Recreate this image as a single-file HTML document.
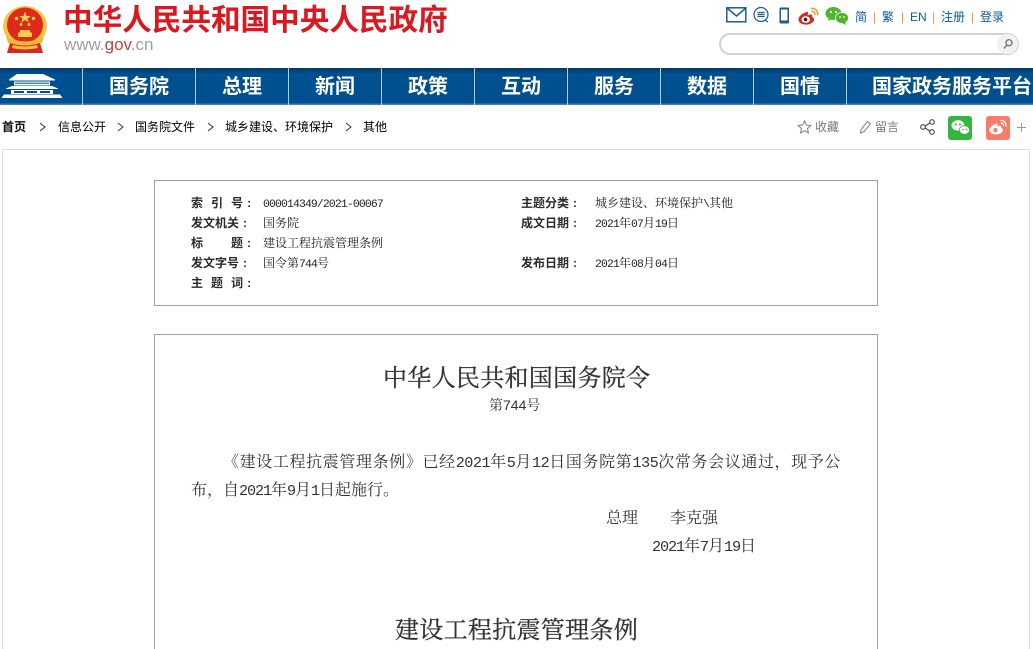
<!DOCTYPE html>
<html lang="zh"><head><meta charset="utf-8"><title>建设工程抗震管理条例</title>
<style>
*{margin:0;padding:0;box-sizing:border-box}
html,body{width:1033px;height:649px;overflow:hidden;background:#fff}
body{position:relative;font-family:"Liberation Sans","WenQuanYi Zen Hei","Noto Sans CJK SC",sans-serif;color:#222}
.a{position:absolute;white-space:nowrap}
svg{position:absolute;overflow:visible}
i{font-style:normal;font-family:"Liberation Mono",monospace;font-size:.95em;letter-spacing:-.074em}
.p1 i{letter-spacing:-.5px}
.nav{position:absolute;left:0;top:68px;width:1033px;height:37px;background:linear-gradient(#003a68 0,#00508f 6px,#00508f 35px,#3f82b5 36px)}
.sep{position:absolute;top:68px;width:1px;height:37px;background:#b7c9d8}
.n{position:absolute;top:74px;height:26px;line-height:26px;color:#fff;font-size:20px;font-weight:bold;text-align:center;font-family:"Liberation Sans","Noto Sans CJK SC",sans-serif}
.tl{font-size:12px;color:#0b5a93;top:9px;line-height:16px}
.bar{font-size:12px;color:#e8923a;top:9px;line-height:16px}
.b{font-size:12px;line-height:14px;color:#000}
.k{font-size:12px;font-weight:bold;line-height:14px;color:#2b2b2b;word-spacing:4.700px;font-family:"Liberation Sans","Noto Sans CJK SC",sans-serif}
.k s{text-decoration:none;margin-left:4px}
.v{font-size:12px;line-height:14px;color:#222;font-family:"Liberation Serif","Noto Serif CJK SC",serif}
.p{font-size:16px;line-height:20px;color:#333;font-family:"Liberation Serif","Noto Serif CJK SC",serif}
.h{font-family:"Liberation Serif","Noto Serif CJK SC",serif;color:#333;font-size:24px;line-height:30px;letter-spacing:.3px;-webkit-text-stroke:.3px #333}
</style></head><body>

<!-- emblem -->
<svg style="left:0;top:0" width="60" height="56" viewBox="0 0 60 56">
<ellipse cx="25" cy="26" rx="22" ry="20" fill="#f2c544"/>
<ellipse cx="25" cy="25" rx="18" ry="17.500" fill="#dd2a1b"/>
<polygon points="25,11.500 26.600,16 31,16 27.500,18.500 28.800,22.500 25,20 21.200,22.500 22.500,18.500 19,16 23.400,16" fill="#f5cf50"/>
<circle cx="16.500" cy="18.500" r="1.700" fill="#f5cf50"/><circle cx="33.500" cy="18.500" r="1.700" fill="#f5cf50"/>
<circle cx="21" cy="24.500" r="1.500" fill="#f5cf50"/><circle cx="29" cy="24.500" r="1.500" fill="#f5cf50"/>
<path d="M18 37h14v-4l-2-1v-2h-10v2l-2 1z" fill="#f5cf50"/>
<path d="M6 36q19 11 38 0l-2 7q-17 6-34 0z" fill="#eeb93a"/>
<path d="M10 43q15 5 30 0l3 10H7z" fill="#d8281c"/>
<path d="M13 45q12 3 24 0l1 3q-13 3-26 0z" fill="#f0c040"/>
</svg>

<div class="a" style="left:63px;top:3px;font-size:29.600px;line-height:36px;font-weight:bold;color:#d91820;font-family:'Liberation Sans','Noto Sans CJK SC',sans-serif">中华人民共和国中央人民政府</div>
<div class="a" style="left:64px;top:36px;font-size:17px;line-height:18px;color:#a0a0a0">www.<span style="color:#b9453c">gov</span>.cn</div>

<!-- top-right icons -->
<svg style="left:726px;top:7px" width="21" height="16" viewBox="0 0 21 16" fill="none" stroke="#1a5c90" stroke-width="1.500"><rect x=".8" y=".8" width="19" height="14"/><path d="M1 1l9.500 8L20 1"/></svg>
<svg style="left:753px;top:7px" width="17" height="16" viewBox="0 0 17 16" fill="none" stroke="#1a5c90" stroke-width="1.200"><circle cx="8" cy="7.500" r="7"/><path d="M4.500 5.500h7M4.500 7.500h7M4.500 9.500h7"/><path d="M12 13l3 2"/></svg>
<svg style="left:779px;top:7px" width="11" height="17" viewBox="0 0 11 17"><rect x=".5" y=".5" width="9.500" height="16" rx="1" fill="#1a5c90"/><rect x="2" y="2.500" width="6.500" height="11" fill="#fff"/></svg>
<svg style="left:798px;top:7px" width="22" height="19" viewBox="0 0 22 19"><path d="M9 5C4 6 0 10 .500 13c.6 4 6 5 9 4.500 4-.6 7-3 6.500-5.500-.3-1.500-2-2-2-2 .5-2-.5-3-2-2.500L9.500 8.500C10.500 6 10.500 4.700 9 5z" fill="#e2231a"/><ellipse cx="7.800" cy="12.500" rx="4.300" ry="3.300" fill="#fff"/><circle cx="7.500" cy="12.500" r="1.800" fill="#222"/><path d="M13 1.500c4-.8 7.500 2.500 6.500 7M13.500 4.500c2.200-.4 3.700 1.300 3.200 3.500" fill="none" stroke="#f09a2b" stroke-width="1.500"/></svg>
<svg style="left:825px;top:7px" width="24" height="18" viewBox="0 0 24 18"><ellipse cx="8.500" cy="6.500" rx="8" ry="6.500" fill="#4fb52a"/><path d="M4 11l-1 3 4-2z" fill="#4fb52a"/><ellipse cx="17" cy="11" rx="6.500" ry="5.500" fill="#4fb52a" stroke="#fff" stroke-width=".8"/><path d="M20 15l1 3-4-2z" fill="#4fb52a"/><circle cx="6" cy="5" r="1.100" fill="#fff"/><circle cx="11" cy="5" r="1.100" fill="#fff"/><circle cx="15" cy="10" r=".9" fill="#fff"/><circle cx="19" cy="10" r=".9" fill="#fff"/></svg>
<div class="a tl" style="left:855px">简</div><div class="a bar" style="left:873px">|</div>
<div class="a tl" style="left:882px">繁</div><div class="a bar" style="left:901px">|</div>
<div class="a tl" style="left:910px">EN</div><div class="a bar" style="left:932px">|</div>
<div class="a tl" style="left:941px">注册</div><div class="a bar" style="left:971px">|</div>
<div class="a tl" style="left:980px">登录</div>

<!-- search -->
<div class="a" style="left:719px;top:33px;width:300px;height:22px;border:2px solid #d2d2d2;border-radius:11px;background:#fff"></div>
<div class="a" style="left:997px;top:34px;width:21px;height:20px;border-radius:10px;background:#f1f1f1"></div>
<svg style="left:1002px;top:38px" width="12" height="12" viewBox="0 0 12 12" fill="none" stroke="#777" stroke-width="1.400"><circle cx="7" cy="4.700" r="3"/><path d="M5 7L1.800 10.500"/></svg>

<!-- nav -->
<div class="nav"></div>
<svg style="left:0;top:72px" width="64" height="28" viewBox="0 0 64 28" fill="#fff">
<path d="M17 2h26l12 5.500v1H9v-1z"/>
<path d="M14 9.500h36v4H14z"/>
<path d="M15 10.500h34v1.500H15z" fill="#4f86b2"/>
<path d="M12 14h40l6 2.500v.5H6v-.5z"/>
<path d="M11 18h42v4H11z"/>
<path d="M14 19h10v2H14zM27 19h10v2H27zM40 19h10v2H40z" fill="#00508f"/>
<path d="M4 22.500h56l2.500 3.500H1.500z"/>
</svg>
<div class="sep" style="left:82px"></div><div class="sep" style="left:195px"></div><div class="sep" style="left:288px"></div><div class="sep" style="left:381px"></div><div class="sep" style="left:474px"></div><div class="sep" style="left:567px"></div><div class="sep" style="left:660px"></div><div class="sep" style="left:753px"></div><div class="sep" style="left:846px"></div>
<div class="n" style="left:83px;width:112px">国务院</div>
<div class="n" style="left:196px;width:92px">总理</div>
<div class="n" style="left:289px;width:92px">新闻</div>
<div class="n" style="left:382px;width:92px">政策</div>
<div class="n" style="left:475px;width:92px">互动</div>
<div class="n" style="left:568px;width:92px">服务</div>
<div class="n" style="left:661px;width:92px">数据</div>
<div class="n" style="left:754px;width:92px">国情</div>
<div class="n" style="left:847px;width:186px;text-align:right;padding-right:1px">国家政务服务平台</div>

<!-- breadcrumb -->
<div class="a b" style="left:2px;top:120px;font-weight:bold;color:#111">首页</div>
<div class="a b" style="left:58px;top:120px">信息公开</div>
<div class="a b" style="left:135px;top:120px">国务院文件</div>
<div class="a b" style="left:225px;top:120px">城乡建设、环境保护</div>
<div class="a b" style="left:363px;top:120px">其他</div>
<svg style="left:0;top:120px" width="400" height="14" fill="none" stroke="#333" stroke-width="1"><path d="M40 3l5 4-5 4M118 3l5 4-5 4M208 3l5 4-5 4M346 3l5 4-5 4"/></svg>

<!-- share row -->
<svg style="left:797px;top:120px" width="15" height="14" viewBox="0 0 15 14" fill="none" stroke="#888" stroke-width="1.100"><path d="M7.500 1l1.900 4 4.400.5-3.300 3 .9 4.400-3.900-2.200-3.900 2.200.9-4.400-3.300-3L5.600 5z"/></svg>
<div class="a" style="left:815px;top:120px;font-size:12px;line-height:14px;color:#777">收藏</div>
<svg style="left:859px;top:120px" width="13" height="14" viewBox="0 0 13 14" fill="none" stroke="#888" stroke-width="1.100"><path d="M1.500 13l.6-3.500L8.500 1.500l3 2.200-6.300 7.900z"/></svg>
<div class="a" style="left:875px;top:120px;font-size:12px;line-height:14px;color:#777">留言</div>
<svg style="left:920px;top:119px" width="15" height="16" viewBox="0 0 15 16" fill="none" stroke="#444" stroke-width="1.100"><circle cx="3" cy="8" r="2.300"/><circle cx="12" cy="3" r="2.300"/><circle cx="12" cy="13" r="2.300"/><path d="M5 7l5-3M5 9l5 3"/></svg>
<div class="a" style="left:948px;top:116px;width:24px;height:24px;border-radius:3px;background:#34b53c"></div>
<svg style="left:951px;top:120px" width="19" height="16" viewBox="0 0 19 16"><ellipse cx="7" cy="5.500" rx="6.500" ry="5.200" fill="#fff"/><ellipse cx="13.500" cy="10" rx="5.200" ry="4.300" fill="#fff" stroke="#34b53c" stroke-width=".8"/><circle cx="5" cy="4.500" r="1" fill="#34b53c"/><circle cx="9" cy="4.500" r="1" fill="#34b53c"/><circle cx="12" cy="9.500" r=".8" fill="#34b53c"/><circle cx="15.500" cy="9.500" r=".8" fill="#34b53c"/></svg>
<div class="a" style="left:986px;top:116px;width:24px;height:24px;border-radius:3px;background:#fb7a68"></div>
<svg style="left:989px;top:119px" width="19" height="17" viewBox="0 0 22 19"><path d="M9 5C4 6 0 10 .500 13c.6 4 6 5 9 4.500 4-.6 7-3 6.500-5.500-.3-1.500-2-2-2-2 .5-2-.5-3-2-2.500L9.500 8.500C10.500 6 10.500 4.700 9 5z" fill="#fff"/><circle cx="7.500" cy="12.500" r="2.500" fill="#fb7a68"/><path d="M13 1.500c4-.8 7.500 2.500 6.500 7M13.500 4.500c2.200-.4 3.700 1.300 3.200 3.500" fill="none" stroke="#fff" stroke-width="1.500"/></svg>
<svg style="left:1016px;top:122px" width="11" height="11" stroke="#999" stroke-width="1"><path d="M5.500 1v9M1 5.500h9"/></svg>

<!-- main frame -->
<div class="a" style="left:2px;top:149px;width:1028px;height:520px;border:1px solid #dedede"></div>

<!-- info box -->
<div class="a" style="left:154px;top:180px;width:724px;height:126px;border:1px solid #a0a0a0"></div>
<div class="a k" style="left:191px;top:196px">索 引 号<s>:</s></div>
<div class="a k" style="left:191px;top:216px">发文机关<s>:</s></div>
<div class="a k" style="left:191px;top:236px">标<span style="margin-left:28px">题</span><s>:</s></div>
<div class="a k" style="left:191px;top:256px">发文字号<s>:</s></div>
<div class="a k" style="left:191px;top:276px">主 题 词<s>:</s></div>
<div class="a v" style="left:263px;top:196px"><i>000014349/2021-00067</i></div>
<div class="a v" style="left:263px;top:216px">国务院</div>
<div class="a v" style="left:263px;top:236px">建设工程抗震管理条例</div>
<div class="a v" style="left:263px;top:256px">国令第<i>744</i>号</div>
<div class="a k" style="left:521px;top:196px">主题分类<s>:</s></div>
<div class="a k" style="left:521px;top:216px">成文日期<s>:</s></div>
<div class="a k" style="left:521px;top:256px">发布日期<s>:</s></div>
<div class="a v" style="left:595px;top:196px">城乡建设、环境保护<i>\</i>其他</div>
<div class="a v" style="left:595px;top:216px"><i>2021</i>年<i>07</i>月<i>19</i>日</div>
<div class="a v" style="left:595px;top:256px"><i>2021</i>年<i>08</i>月<i>04</i>日</div>

<!-- article -->
<div class="a" style="left:154px;top:334px;width:724px;height:340px;border:1px solid #a0a0a0"></div>
<div class="a h" style="left:383px;top:364px">中华人民共和国国务院令</div>
<div class="a" style="left:489px;top:397px;font-size:14px;line-height:16px;color:#333;font-family:'Liberation Sans','Noto Serif CJK SC',serif">第744号</div>
<div class="a p p1" style="left:223px;top:453px;letter-spacing:.62px">《建设工程抗震管理条例》已经<i>2021</i>年<i>5</i>月<i>12</i>日国务院第<i>135</i>次常务会议通过，现予公</div>
<div class="a p" style="left:191px;top:481px">布，自<i>2021</i>年<i>9</i>月<i>1</i>日起施行。</div>
<div class="a p" style="left:606px;top:509px">总理</div>
<div class="a p" style="left:670px;top:509px">李克强</div>
<div class="a p" style="left:652px;top:537px"><i>2021</i>年<i>7</i>月<i>19</i>日</div>
<div class="a h" style="left:395px;top:616px">建设工程抗震管理条例</div>
</body></html>
